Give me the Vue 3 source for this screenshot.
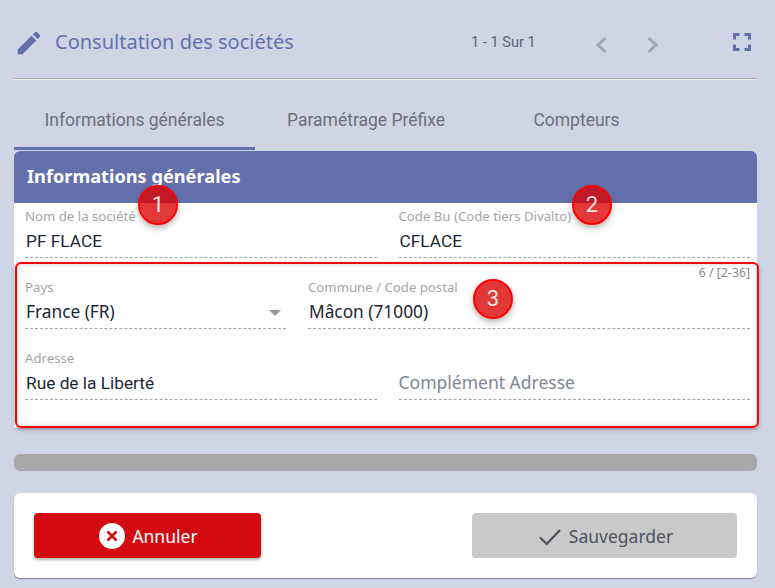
<script setup>
const tabs = [
  { label: 'Informations générales', active: true },
  { label: 'Paramétrage Préfixe', active: false },
  { label: 'Compteurs', active: false },
]
</script>

<template>
  <div class="page">
    <header class="top">
      <svg class="pencil" viewBox="0 0 24 24" width="30" height="30"><path fill="#6370ac" d="M3 17.25V21h3.75L17.81 9.94l-3.75-3.75L3 17.25zM20.71 7.04a1 1 0 0 0 0-1.41l-2.34-2.34a1 1 0 0 0-1.41 0l-1.83 1.83 3.75 3.75 1.83-1.83z"/></svg>
      <h1 class="title">Consultation des sociétés</h1>
      <span class="count">1 - 1 Sur 1</span>
      <svg class="nav prev" viewBox="0 0 14 18" width="14" height="18"><path d="M11.5 2 4 9l7.5 7" fill="none" stroke="#a3a6b2" stroke-width="3"/></svg>
      <svg class="nav next" viewBox="0 0 14 18" width="14" height="18"><path d="M2.5 2 10 9l-7.5 7" fill="none" stroke="#a3a6b2" stroke-width="3"/></svg>
      <svg class="full" viewBox="0 0 18 18" width="18" height="18"><path d="M1.5 6.500V1.500H6.500M11.500 1.500H16.500V6.500M16.500 11.500V16.500H11.500M6.500 16.500H1.500V11.500" fill="none" stroke="#6370ac" stroke-width="3"/></svg>
    </header>

    <nav class="tabs">
      <div v-for="t in tabs" :key="t.label" class="tab" :class="{ active: t.active }">{{ t.label }}</div>
    </nav>

    <main class="card">
      <div class="card-head">Informations générales</div>
      <div class="row first">
        <div class="field">
          <label>Nom de la société</label>
          <div class="value roboto">PF FLACE</div>
        </div>
        <div class="field">
          <label>Code Bu (Code tiers Divalto)</label>
          <div class="value roboto">CFLACE</div>
        </div>
      </div>
      <span class="badge b1">1</span>
      <span class="badge b2">2</span>

      <section class="address">
        <span class="hint">6 / [2-36]</span>
        <span class="badge b3">3</span>
        <div class="row split">
          <div class="field">
            <label>Pays</label>
            <div class="value">France (FR)<i class="caret"></i></div>
          </div>
          <div class="field">
            <label>Commune / Code postal</label>
            <div class="value">Mâcon (71000)</div>
          </div>
        </div>
        <div class="row second">
          <div class="field">
            <label>Adresse</label>
            <div class="value roboto">Rue de la Liberté</div>
          </div>
          <div class="field">
            <label>&nbsp;</label>
            <div class="value placeholder">Complément Adresse</div>
          </div>
        </div>
      </section>
    </main>

    <div class="bar"></div>

    <footer class="actions">
      <button class="btn cancel">
        <svg viewBox="0 0 26 26" width="26" height="26"><circle cx="13" cy="13" r="13" fill="#fff"/><path d="M8.500 8.500l9 9M17.500 8.500l-9 9" stroke="#d30b11" stroke-width="2.600"/></svg>
        Annuler
      </button>
      <button class="btn save">
        <svg viewBox="0 0 24 24" width="24" height="24"><path d="M2 13.500 8.700 20 22 6" fill="none" stroke="#4b4f5c" stroke-width="2.200"/></svg>
        Sauvegarder
      </button>
    </footer>
  </div>
</template>

<style>
html, body { margin: 0; background: #d0d5e6; }
</style>

<style scoped>
.page {
  width: 775px;
  height: 588px;
  box-sizing: border-box;
  padding: 0 18px 0 14px;
  background: #d0d5e6;
  font-family: "Noto Sans", sans-serif;
  overflow: hidden;
}
.top {
  display: flex;
  align-items: center;
  border-bottom: 1px solid #a6a6a6;
  box-shadow: 0 1px 0 #eef0f6;
  padding-top: 8px;
  height: 70px;
}
.pencil { margin: 0 11px 0 0; flex: none; }
.title {
  margin: 0;
  font-size: 20px;
  font-weight: 400;
  color: #6370ac;
  line-height: 28px;
  width: 416px;
  position: relative;
  top: -1px;
}
.count {
  font: 14.600px Roboto, sans-serif;
  color: #5f5f80;
  width: 123px;
  position: relative;
  top: -1px;
}
.nav { flex: none; position: relative; top: 2px; }
.prev { margin-right: 38px; }
.full { margin-left: 73px; position: relative; top: -1px; }
.tabs {
  display: flex;
  height: 71px;
  margin-top: 1px;
}
.tab {
  width: 241px;
  box-sizing: border-box;
  text-align: center;
  font: 400 17.500px/80px Roboto, sans-serif;
  color: #6c6f78;
  height: 70px;
}
.tab.active { border-bottom: 3px solid #6370ac; }
.tab:nth-child(2) { width: 222px; }
.tab:nth-child(3) { width: 199px; }
.card {
  position: relative;
  height: 277px;
  background: #fff;
  border-radius: 6px 6px 0 0;
  box-shadow: 0 1px 1px rgba(0,0,0,.1);
}
.card-head {
  height: 52px;
  background: #6370ac;
  border-radius: 6px 6px 0 0;
  color: #fff;
  font-size: 18.200px;
  font-weight: 700;
  line-height: 50px;
  padding-left: 13px;
}
.row { display: flex; gap: 22px; }
.first { padding: 0 7px 0 11px; }
.split, .second { padding: 0 7px 0 8px; }
.second { margin-top: 21px; }
.first .field, .second .field { flex: 1; }
.split .field:first-child { width: 261px; flex: none; }
.split .field:last-child { flex: 1; }
.field { min-width: 0; }
label {
  display: block;
  font-size: 13.200px;
  line-height: 16px;
  color: #a5a5a5;
  height: 16px;
}
.first label { padding-top: 5px; }
.value {
  position: relative;
  font-size: 17.300px;
  line-height: 26px;
  height: 30px;
  margin-top: 4px;
  padding: 0 0 0 1px;
  box-sizing: border-box;
  color: #1d2733;
  border-bottom: 1px dashed #a5a5a5;
}
.roboto { font-family: Roboto, sans-serif; line-height: 24px; padding-top: 1px; }
.placeholder { color: #808694; padding-left: 0; font-size: 17.500px; line-height: 24px; }
.caret {
  position: absolute;
  right: 5px;
  top: 11px;
  border: 6px solid transparent;
  border-top: 6px solid #9c9c9c;
  border-bottom: 0;
}
.address {
  position: relative;
  box-sizing: border-box;
  height: 166px;
  width: 744px;
  margin: 4px 0 0 1px;
  padding-top: 15px;
  border: 2px solid #f00;
  border-radius: 6px;
  box-shadow: inset 0 0 5px rgba(0,0,0,.2), 0 2px 4px rgba(0,0,0,.25);
}
.hint {
  position: absolute;
  top: 1px;
  right: 7px;
  font-size: 12.300px;
  line-height: 16px;
  color: #8a8a8a;
}
.badge {
  position: absolute;
  width: 40px;
  height: 40px;
  box-sizing: border-box;
  border: 2px solid #f00;
  border-radius: 50%;
  background: rgba(219, 0, 0, .78);
  color: rgba(255,255,255,.9);
  font: 22px/36px Roboto, sans-serif;
  text-align: center;
  box-shadow: 0 3px 6px rgba(0,0,0,.3);
  z-index: 2;
}
.b1 { left: 124px; top: 34px; }
.b2 { left: 558px; top: 34px; }
.b3 { left: 456px; top: 15px; }
.bar {
  height: 17px;
  margin-top: 26px;
  background: #a8a8a8;
  border-radius: 6px;
}
.actions {
  display: flex;
  justify-content: space-between;
  margin-top: 22px;
  height: 85px;
  box-sizing: border-box;
  padding: 20px 20px 0;
  background: #fff;
  border-radius: 6px;
  box-shadow: 0 1px 1px rgba(0,0,0,.4);
}
.btn {
  height: 45px;
  border: 0;
  border-radius: 4px;
  display: flex;
  align-items: center;
  justify-content: center;
  font: 17.500px "Noto Sans", sans-serif;
  gap: 7px;
  padding: 0 0 0 2px;
}
.cancel {
  width: 227px;
  background: #d30b11;
  color: #fff;
  box-shadow: 0 2px 3px rgba(0,0,0,.3);
}
.save {
  width: 265px;
  background: #c9c9c9;
  color: #4f5361;
}
</style>
